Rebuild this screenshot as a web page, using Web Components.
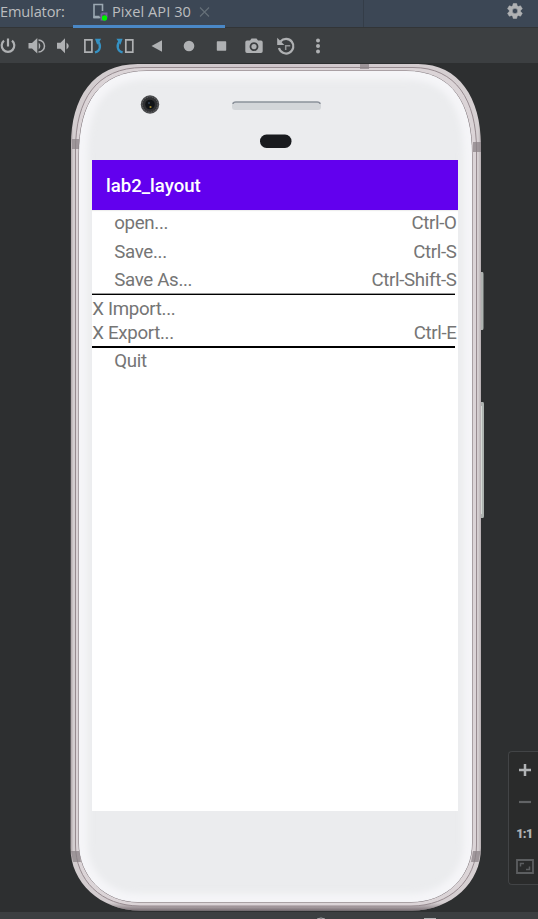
<!DOCTYPE html>
<html lang="en"><head><meta charset="utf-8"><title>Emulator</title>
<style>html,body{margin:0;height:100%;overflow:hidden;background:#2d2f30}</style></head>
<body><emulator-window></emulator-window>
<script>
const define=(name,html)=>customElements.define(name,class extends HTMLElement{
  constructor(){super();this.attachShadow({mode:'open'}).innerHTML=html;}
});

define('tab-strip',`<style>
:host{display:flex;height:27px;background:#3c4755;border-bottom:1px solid #323537;font:14.6px/22px "Open Sans","Noto Sans",sans-serif;color:#bbbdbf;box-sizing:content-box}
.label{width:73px;white-space:nowrap;letter-spacing:-.15px}
.tab{width:152px;height:28px;box-sizing:border-box;border-bottom:3px solid #4a88c7;display:flex;align-items:flex-start;padding-left:19px}
.tab svg{margin-top:3px}.name{margin-left:1px;width:86px;white-space:nowrap;letter-spacing:.05px}
.gap{width:138px;border-right:1px solid #343d48}
.gear{margin:2px 0 0 142px}
svg{display:block;flex:none}
</style><span class="label"><slot name="label"></slot></span>
<div class="tab"><svg width="19" height="20" viewBox="0 0 19 20"><path d="M8.500 14.500H2V1.500h8.500V8" fill="none" stroke="#9ba8b2" stroke-width="1.600"/><path d="M1.500 14h6" stroke="#9ba8b2" stroke-width="2.500"/><path d="M9.500 10.500h5v4M9.500 10.500v6h4" stroke="#76609a" stroke-width="2" fill="none"/><circle cx="12.500" cy="15" r="2.700" fill="#00f400"/></svg><span class="name"><slot></slot></span>
<svg width="14" height="20" viewBox="0 0 14 20"><path d="M2 4.500l9 9m0-9l-9 9" stroke="#667079" stroke-width="1.100"/></svg></div>
<div class="gap"></div>
<svg class="gear" width="18" height="18" viewBox="0 0 24 24"><path fill="#afb1b3" stroke="#afb1b3" stroke-width=".7" d="M19.400 13c.1-.3.1-.6.1-1s0-.7-.1-1l2.100-1.600c.2-.2.2-.4.1-.6l-2-3.500c-.1-.2-.4-.3-.6-.2l-2.500 1c-.5-.4-1.100-.7-1.700-1L14.400 2.400c0-.2-.2-.4-.5-.4h-4c-.2 0-.4.200-.5.400L9 5.100c-.6.200-1.200.600-1.700 1l-2.500-1c-.2-.1-.5 0-.6.200l-2 3.500c-.1.200 0 .500.100.600L4.400 11c0 .3-.1.600-.1 1s0 .7.100 1l-2.100 1.600c-.2.200-.2.400-.1.600l2 3.500c.1.200.4.300.6.200l2.500-1c.5.400 1.100.7 1.700 1l.4 2.700c0 .2.200.4.500.4h4c.2 0 .5-.2.500-.4l.4-2.700c.6-.2 1.200-.6 1.700-1l2.500 1c.2.100.5 0 .6-.2l2-3.500c.1-.2.100-.5-.1-.6L19.400 13zM12 15.600a3.600 3.600 0 1 1 0-7.200 3.600 3.600 0 0 1 0 7.200z"/></svg>`);

define('tool-bar',`<style>:host{display:block;height:35px;background:#3c3f41}svg{display:block}</style>
<svg width="330" height="35" viewBox="0 28 330 35" fill="#afb1b3">
<g fill="none" stroke="#afb1b3" stroke-width="2.200"><path d="M4 40.700A6.300 6.300 0 1 0 12 40.700M8 38.500v8"/></g>
<path d="M28.500 43h3.500l5.300-5v15.500l-5.300-5h-3.500zM38.700 42.500q3.300 3.500 0 7z"/><path d="M38.500 40a6 6 0 0 1 0 12" fill="none" stroke="#afb1b3" stroke-width="1.500"/>
<path d="M57 42.800h3.500l4.500-4.500v15l-4.500-4.500H57zM66.500 42.500q4.500 3.500 0 7z"/>
<g fill="none" stroke="#afb1b3" stroke-width="1.700"><path d="M84.900 39.800h7v12.400h-7zM125.800 39.800h7v12.400h-7z"/></g>
<g fill="none" stroke="#3592c4" stroke-width="2.300"><path d="M95 52.400c5.800-1.500 6.200-7.500 2.800-11.400M122.600 52.400c-5.800-1.500-6.200-7.500-2.800-11.400"/></g><path fill="#3592c4" d="M95 38.700h6.200l-4 6zM122.600 38.700h-6.200l4 6z"/>
<path d="M151.500 46l10.500-5.800v11.600z"/><circle cx="189" cy="46" r="5.300"/><rect x="216.800" y="41.300" width="9.400" height="9.400" rx=".6"/>
<path fill-rule="evenodd" d="M247 40.500h3l1.500-2h5l1.500 2h3q1.700 0 1.700 1.700v9q0 1.700-1.700 1.700h-14q-1.700 0-1.700-1.700v-9q0-1.700 1.700-1.700zM254 42.200a4.400 4.400 0 1 0 .01 0z"/><circle cx="254" cy="46.600" r="2.600"/>
<path d="M280.500 41.500A7.300 7.300 0 1 1 279 48" fill="none" stroke="#afb1b3" stroke-width="2.200"/><path d="M277.200 37.800v7.200h7.200z"/><path d="M285.700 50v-4.300h4.500" fill="none" stroke="#929496" stroke-width="1.500"/>
<circle cx="318" cy="40.600" r="2"/><circle cx="318" cy="46" r="2"/><circle cx="318" cy="51.400" r="2"/></svg>`);

define('menu-row',`<style>:host{display:flex;justify-content:space-between;height:24.350px;padding:0 1.400px 0 .300px;font:18.700px/24.350px Roboto,sans-serif;letter-spacing:-.330px;color:#757575;white-space:nowrap}:host([inset]){padding:2.050px 1.400px 2.050px 22.300px}</style><slot></slot><slot name="key"></slot>`);
define('menu-rule',`<style>:host{display:block;width:363px;height:2px;background:#000}:host([soft]){height:1px;border-top:1px solid #999}</style>`);

define('app-screen',`<style>:host{display:block;width:366px;height:651px;background:#fff}
header{height:50px;background:#6200ee;color:#fff;font:500 18.600px/52px Roboto,sans-serif;padding-left:14px;box-shadow:0 1px 1px #eee}
main{display:flex;flex-direction:column;margin-top:-.8px}</style><header><slot name="title"></slot></header><main><slot></slot></main>`);

define('phone-frame',`<style>
:host{display:block;position:relative;width:414px;height:848px}
.art{position:absolute;inset:0}
.screen{position:relative;padding:97px 0 0 22px}
</style><svg class="art" width="414" height="848" viewBox="70 63 414 848">
<defs><linearGradient id="rim" x1="0" x2="1" y1="0" y2="0"><stop offset="0" stop-color="#a99fa2"/><stop offset=".007" stop-color="#d3cdcf"/><stop offset=".5" stop-color="#cfc6cb"/><stop offset=".993" stop-color="#d6d0d2"/><stop offset="1" stop-color="#b5adb0"/></linearGradient>
<linearGradient id="bot" x1="0" x2="0" y1="0" y2="1"><stop offset=".93" stop-color="#756a6e" stop-opacity="0"/><stop offset="1" stop-color="#65595f"/></linearGradient>
<clipPath id="face"><path id="p" d="M79 155C79 103 99 71 147 71H406C452 71 472 103 472 155V843C472 876 447 902 411 902H138C104 902 79 876 79 843Z"/></clipPath><filter id="blur"><feGaussianBlur stdDeviation="3"/></filter></defs>
<path d="M479 272h3.500q1 0 1 2v54q0 2-1 2H479zM479 402h4q1 0 1 2v112q0 2-1 2H479z" fill="#aeb3b0"/><path d="M481.500 406v108" stroke="#d5dbd6"/>
<path d="M71 145C71 98 93 64 138 64H418C459 64 481 98 481 145V848C481 882 452 910.500 412 910.500H140C100 910.500 70.500 882 70.500 848Z" fill="url(#rim)"/>
<path d="M71 800H481V848C481 882 452 910.500 412 910.500H140C100 910.500 70.500 882 70.500 848Z" fill="url(#bot)" opacity=".8"/>
<path d="M75.500 150C75.500 100 96 67.500 143 67.500H413C456 67.500 476.500 100 476.500 150V845C476.500 880 450 906 411 906H140C101 906 75.500 880 75.500 845Z" fill="#dbd4d7" stroke="#978b90"/>
<path d="M72 139h7v10h-7zM473 142h8v10h-8zM360 64h9v5h-9zM71 851h8l2 11h-8zM473 851h7.500l-2 11H471z" fill="#8b8387" fill-opacity=".75"/>
<use href="#p" fill="#ebecee" stroke="#786e73"/>
<g clip-path="url(#face)"><use href="#p" fill="none" stroke="#f5f5f8" stroke-width="17" filter="url(#blur)"/></g>
<circle cx="150" cy="104.500" r="9.200" fill="#48494b"/><circle cx="150" cy="104.500" r="7.600" fill="#303133" stroke="#66686a" stroke-dasharray="1 1.500"/><circle cx="150" cy="104.500" r="4.800" fill="#111417"/><circle cx="150.500" cy="107" r="1.100" fill="#a38b32"/><circle cx="149" cy="103" r="1" fill="#344357"/>
<rect x="232" y="102" width="89" height="8" rx="3" fill="#d3d6d9"/><path d="M233 104q0-2 3-2h81q3 0 3 2" fill="none" stroke="#8c929b" stroke-width="1.500"/>
<rect x="260" y="134.500" width="31.500" height="13.500" rx="6.500" fill="#191b1e"/></svg>
<div class="screen"><slot></slot></div>`);

define('zoom-controls',`<style>:host{display:block;width:29px;height:132px;border:1px solid #424446;border-right:0;border-radius:4px 0 0 4px;background:#2a2b2b;font:900 12.500px/14px Roboto,sans-serif;letter-spacing:-.5px;color:#b0b2b4}
div{height:32px;display:flex;align-items:center;justify-content:center;padding-left:2px}div:first-of-type{padding-top:2px}svg{display:block}</style>
<div><svg width="14" height="14"><path d="M1 7h12M7 1v12" stroke="#b2b4b6" stroke-width="2.500"/></svg></div>
<div><svg width="14" height="14"><path d="M1 7h12" stroke="#626466" stroke-width="2.200"/></svg></div><div>1:1</div>
<div><svg width="18" height="15"><path d="M1 1h16v13H1z" fill="none" stroke="#5c5e60" stroke-width="1.800"/><path d="M4.500 7.500v-3H8M13.500 7.500v3H10" fill="none" stroke="#5c5e60" stroke-width="1.500"/></svg></div>`);

define('emulator-window',`<style>:host{display:flex;flex-direction:column;width:538px;height:919px;overflow:hidden;background:#2d2f30}
.stage{display:flex;justify-content:space-between;height:849px;padding-left:70px;flex:none}
zoom-controls{margin-top:688px}footer{height:7px;background:#3c3f41}footer svg{display:block}</style>
<tab-strip><span slot="label">Emulator:</span>Pixel API 30</tab-strip><tool-bar></tool-bar>
<div class="stage"><phone-frame><app-screen><span slot="title">lab2_layout</span>
<menu-row inset>open...<span slot="key">Ctrl-O</span></menu-row>
<menu-row inset>Save...<span slot="key">Ctrl-S</span></menu-row>
<menu-row inset>Save As...<span slot="key">Ctrl-Shift-S</span></menu-row>
<menu-rule soft style="margin-top:-1.400px"></menu-rule>
<menu-row style="margin-top:1.400px">X Import...</menu-row>
<menu-row>X Export...<span slot="key">Ctrl-E</span></menu-row>
<menu-rule style="margin-top:1px"></menu-rule>
<menu-row inset style="margin-top:-1.600px">Quit</menu-row></app-screen></phone-frame><zoom-controls></zoom-controls></div>
<footer><svg width="538" height="7"><path d="M317 7q4-2 8 0M424 6.500h12" fill="none" stroke="#afb1b3"/></svg></footer>`);
</script></body></html>
